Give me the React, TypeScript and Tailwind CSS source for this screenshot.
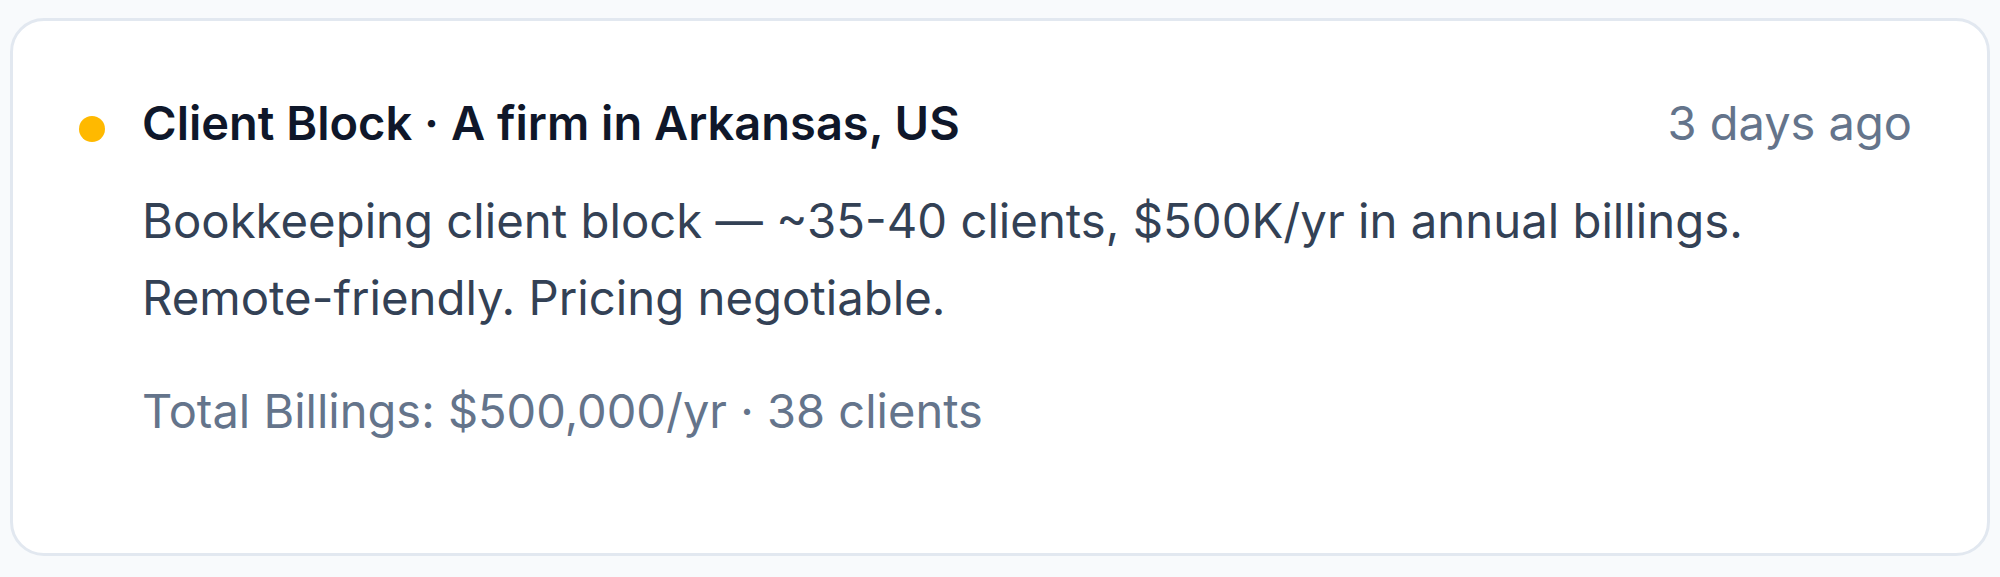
export default function App() {
  return (
    <div className="min-h-screen bg-[#f8fafc] px-[10px] pt-[18px] font-['Inter',sans-serif]">
      <div className="h-[538px] rounded-[34px] border-[3px] border-[#e2e8f0] bg-white pl-[66px] pr-[75px] pt-[66px]">
        {/* Header */}
        <div className="flex items-start justify-between">
          <div className="flex items-start gap-[37px]">
            <span className="mt-[29px] h-[26px] w-[26px] shrink-0 rounded-full bg-[#ffb900]" />
            <h2 className="text-[47px] leading-[72px] font-semibold text-[#0f172a]">
              Client Block · A firm in Arkansas, US
            </h2>
          </div>
          <span className="text-[47px] leading-[72px] text-[#64748b]">3 days ago</span>
        </div>

        <div className="pl-[63px]">
          <p className="mt-[23px] text-[47.3px] leading-[77px] text-[#334155]">
            Bookkeeping client block — ~35-40 clients, $500K/yr in annual billings.
            <br />
            Remote-friendly. Pricing negotiable.
          </p>
          <p className="mt-[42px] text-[47px] leading-[66px] text-[#64748b]">
            Total Billings: $500,000/yr · 38 clients
          </p>
        </div>
      </div>
    </div>
  );
}
